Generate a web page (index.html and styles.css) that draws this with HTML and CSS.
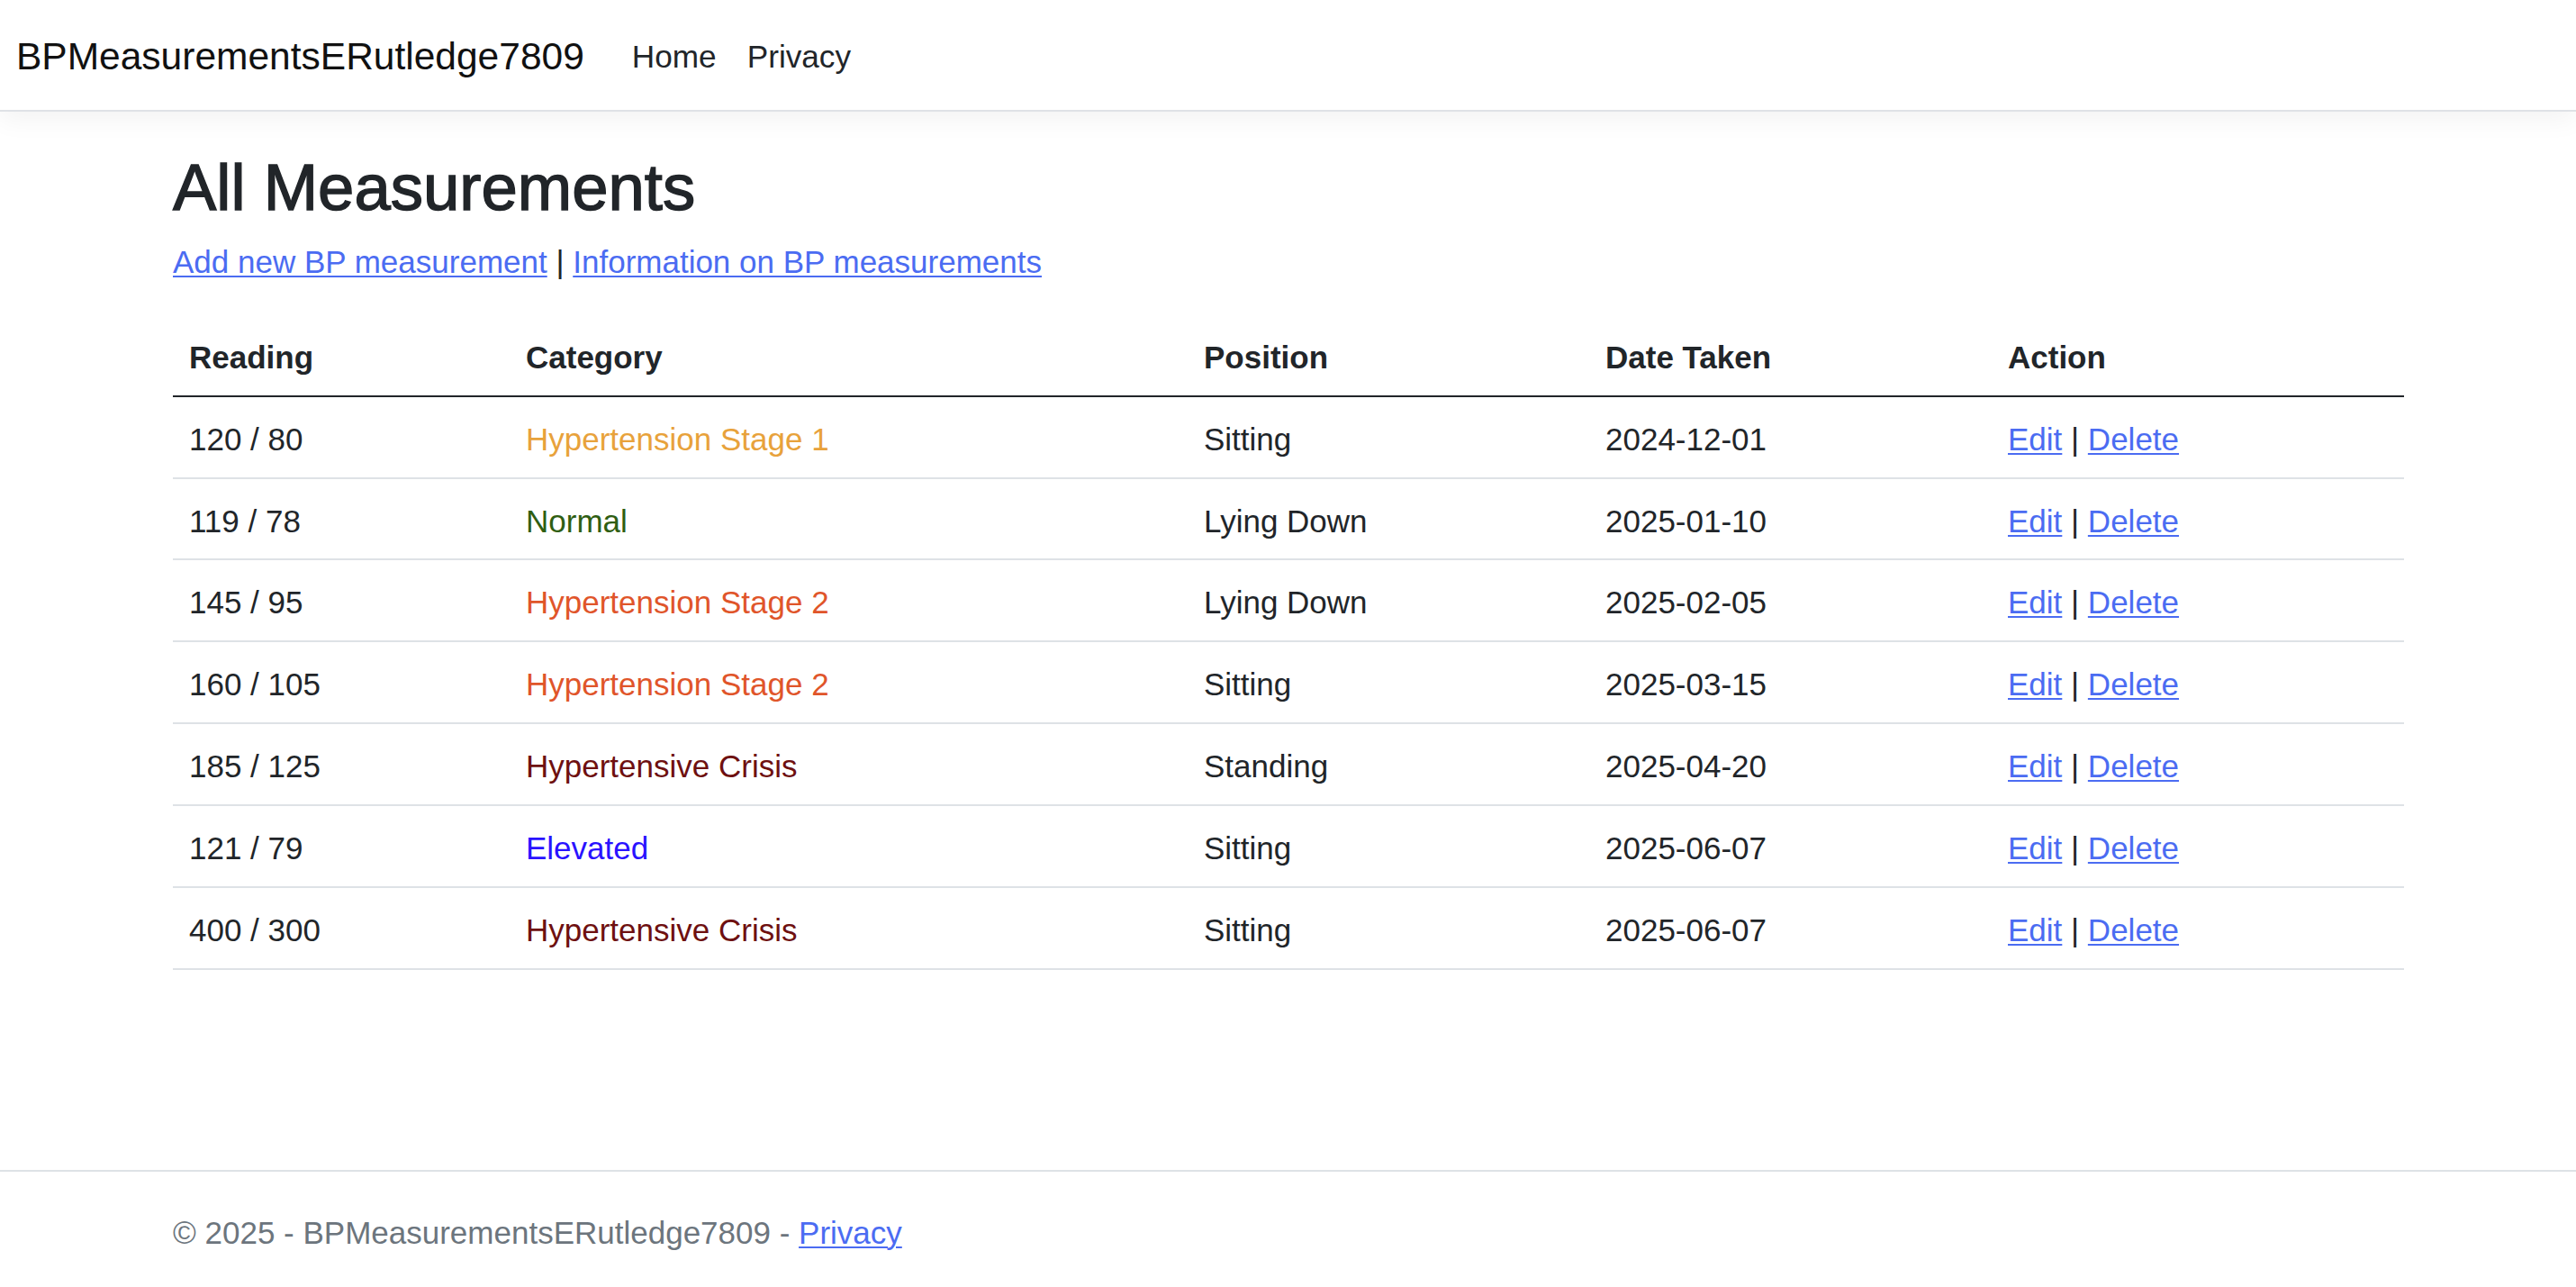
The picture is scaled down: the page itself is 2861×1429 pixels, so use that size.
FILE: index.html
```html
<!DOCTYPE html>
<html lang="en">
<head>
<meta charset="utf-8">
<title>All Measurements - BPMeasurementsERutledge7809</title>
<link rel="stylesheet" href="styles.css">
</head>
<body>
<header class="navbar">
  <a class="brand" href="#">BPMeasurementsERutledge7809</a>
  <nav class="nav">
    <a class="nav-link" href="#">Home</a>
    <a class="nav-link" href="#">Privacy</a>
  </nav>
</header>
<main class="container">
  <h1 class="title">All Measurements</h1>
  <p class="actions"><a href="#">Add new BP measurement</a> | <a href="#">Information on BP measurements</a></p>
  <table class="table">
    <colgroup>
      <col class="c-reading"><col class="c-category"><col class="c-position"><col class="c-date"><col class="c-action">
    </colgroup>
    <thead>
      <tr><th>Reading</th><th>Category</th><th>Position</th><th>Date Taken</th><th>Action</th></tr>
    </thead>
    <tbody>
      <tr><td>120 / 80</td><td class="cat-stage1">Hypertension Stage 1</td><td>Sitting</td><td>2024-12-01</td><td><a href="#">Edit</a> | <a href="#">Delete</a></td></tr>
      <tr><td>119 / 78</td><td class="cat-normal">Normal</td><td>Lying Down</td><td>2025-01-10</td><td><a href="#">Edit</a> | <a href="#">Delete</a></td></tr>
      <tr><td>145 / 95</td><td class="cat-stage2">Hypertension Stage 2</td><td>Lying Down</td><td>2025-02-05</td><td><a href="#">Edit</a> | <a href="#">Delete</a></td></tr>
      <tr><td>160 / 105</td><td class="cat-stage2">Hypertension Stage 2</td><td>Sitting</td><td>2025-03-15</td><td><a href="#">Edit</a> | <a href="#">Delete</a></td></tr>
      <tr><td>185 / 125</td><td class="cat-crisis">Hypertensive Crisis</td><td>Standing</td><td>2025-04-20</td><td><a href="#">Edit</a> | <a href="#">Delete</a></td></tr>
      <tr><td>121 / 79</td><td class="cat-elevated">Elevated</td><td>Sitting</td><td>2025-06-07</td><td><a href="#">Edit</a> | <a href="#">Delete</a></td></tr>
      <tr><td>400 / 300</td><td class="cat-crisis">Hypertensive Crisis</td><td>Sitting</td><td>2025-06-07</td><td><a href="#">Edit</a> | <a href="#">Delete</a></td></tr>
    </tbody>
  </table>
</main>
<footer class="footer">
  <div class="container footer-inner">&copy; 2025 - BPMeasurementsERutledge7809 - <a href="#">Privacy</a></div>
</footer>
</body>
</html>
```
FILE: styles.css
```css
* { box-sizing: border-box; }

html, body { margin: 0; padding: 0; }

body {
  min-height: 100vh;
  display: flex;
  flex-direction: column;
  font-family: "Liberation Sans", Arial, sans-serif;
  font-size: 35px;
  line-height: 53.3px;
  color: #212529;
  background: #fff;
}

a { color: #4b6cf2; text-decoration: underline; text-decoration-thickness: 2px; text-underline-offset: 3px; }

.navbar {
  display: flex;
  align-items: center;
  height: 124px;
  padding: 0 18px;
  border-bottom: 2px solid #dfe2e6;
  box-shadow: 0 9px 27px rgba(0, 0, 0, 0.05);
  background: #fff;
}

.brand {
  font-size: 42.5px;
  line-height: 66px;
  padding-top: 3px;
  color: #111;
  text-decoration: none;
  margin-right: 36px;
}

.nav { display: flex; }

.nav-link {
  padding: 3px 17px 0;
  font-size: 35.2px;
  color: #212529;
  text-decoration: none;
}

.container {
  width: 2531px;
  margin: 0 auto;
  padding: 0 27px;
}

main.container { padding-top: 38px; }

.title {
  margin: 0 0 11px;
  font-size: 72.5px;
  line-height: 91px;
  font-weight: normal;
  -webkit-text-stroke: 1.4px #212529;
  color: #212529;
}

.actions { margin: 0 0 32.5px; }

.table {
  width: 100%;
  border-collapse: collapse;
  table-layout: fixed;
}

.c-reading { width: 374px; }
.c-category { width: 753px; }
.c-position { width: 446px; }
.c-date { width: 447px; }
.c-action { width: 458px; }

.table th, .table td {
  text-align: left;
  padding: 20px 18px 15.6px;
  border-bottom: 2px solid #dee2e6;
  white-space: nowrap;
}

.table th { font-weight: bold; border-bottom-color: #212529; }

.cat-stage1 { color: #e8a23b; }
.cat-normal { color: #2f5e12; }
.cat-stage2 { color: #e0552a; }
.cat-crisis { color: #6e1010; }
.cat-elevated { color: #2a12ff; }

.footer {
  margin-top: auto;
  border-top: 2px solid #dee2e6;
  padding-top: 8px;
  line-height: 120px;
  color: #6c757d;
}
```
